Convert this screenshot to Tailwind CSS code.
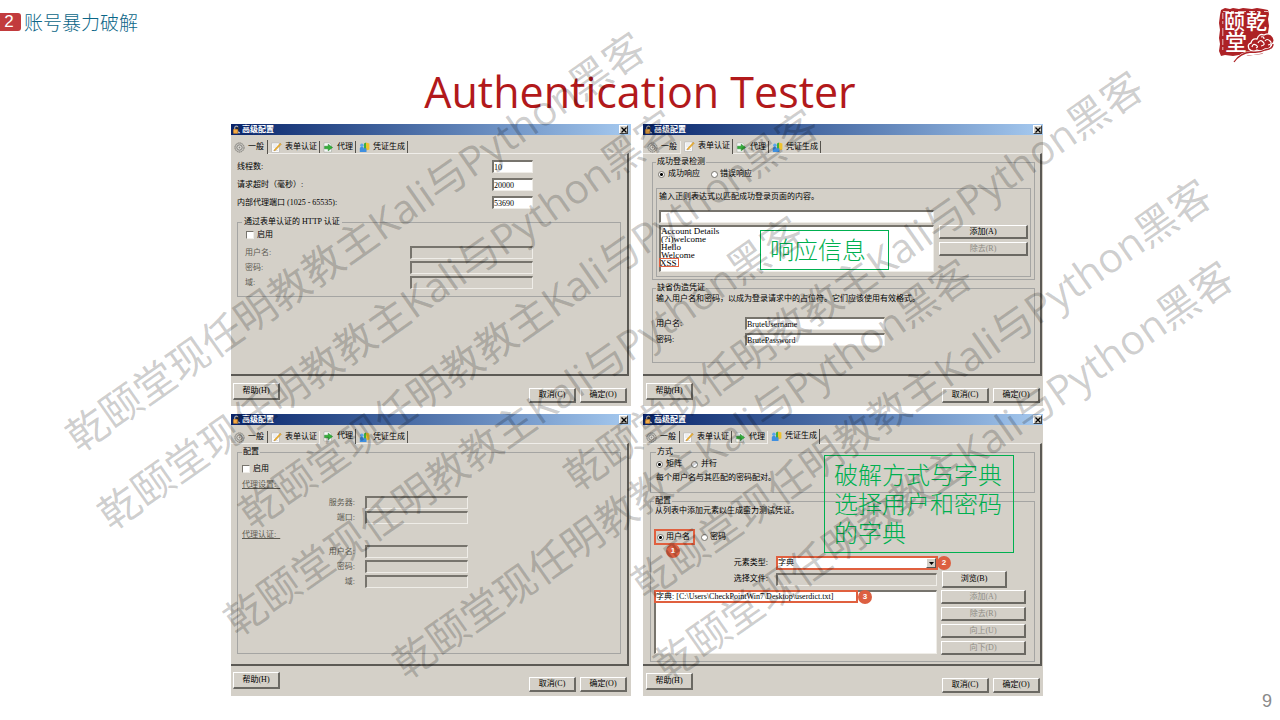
<!DOCTYPE html>
<html lang="zh-CN">
<head>
<meta charset="utf-8">
<meta name="viewport" content="width=device-width, initial-scale=1">
<title>Authentication Tester</title>
<script src="https://cdn.jsdelivr.net/npm/@tailwindcss/browser@4"></script>
</head>
<body class="relative min-h-screen overflow-x-hidden bg-white font-['Open_Sans','Noto_Sans_CJK_SC',sans-serif]">

<svg class="hidden" aria-hidden="true">
  <symbol id="lock" viewBox="0 0 10 10">
    <path d="M3 5.500V3a1.800 1.800 0 0 1 3.600 0v2" fill="none" stroke="#a9a9a9" stroke-width="1.300"/>
    <path d="M5 2.500h2.500v3H5z" fill="#222"/>
    <rect x="1.500" y="4.800" width="5" height="4.600" rx=".6" fill="#f5ac45" stroke="#c9781c" stroke-width=".5"/>
    <path d="M6.800 9.300V7L9 8.300v1z" fill="#ccc"/>
  </symbol>
  <symbol id="gear" viewBox="0 0 11 11">
    <circle cx="5.5" cy="5.5" r="4.6" fill="#c4c2bd" stroke="#77756f" stroke-width=".9" stroke-dasharray="1.6 .5"/>
    <circle cx="5.5" cy="5.5" r="2.6" fill="#dddbd6" stroke="#75736e" stroke-width=".8"/>
    <circle cx="5.5" cy="5.5" r=".9" fill="#8d8b86"/>
  </symbol>
  <symbol id="form" viewBox="0 0 11 11">
    <rect x=".8" y="1" width="7.4" height="9.4" fill="#fdfdfd" stroke="#aaa" stroke-width=".5"/>
    <path d="M2 3h4M2 5h3M2 8.500h5" stroke="#c9ccd2" stroke-width=".6"/>
    <path d="M3.400 7.600 9.200 1.200l1.100 1L4.600 8.300l-1.600.5z" fill="#f2b632" stroke="#b3791c" stroke-width=".4"/>
  </symbol>
  <symbol id="proxy" viewBox="0 0 11 11">
    <path d="M1 .8h5.500L8.500 3v7H1z" fill="#f7f9f7" stroke="#9aa09a" stroke-width=".5"/>
    <path d="M1.600 4.200h3.600V2.200L9.600 5.500 5.200 8.800V6.800H1.600z" fill="#35b13a" stroke="#1b7d24" stroke-width=".5"/>
  </symbol>
  <symbol id="creds" viewBox="0 0 11 11">
    <path d="M.8 10V6.500Q.8 4.800 2.800 4.800T5 6.500V10z" fill="#3f8fe0"/>
    <circle cx="2.900" cy="3.200" r="1.700" fill="#5aa6ec"/>
    <path d="M5 1.500 7 .5v8L5 9.600z" fill="#3fae3d"/>
    <path d="M7 .5 10.400 1.600v6L7 8.500z" fill="#f0c22c"/>
    <path d="M5 6.300h2.500V10H5z" fill="#3f8fe0"/>
  </symbol>
</svg>

<header class="flex h-[62px] items-start justify-between pr-1">
  <div class="flex items-center gap-[3px] pt-3">
    <span class="flex h-[18px] w-[21px] items-center justify-center rounded-r-[3px] bg-[#c23b3d] pr-[3px] font-['Liberation_Sans',sans-serif] text-[17px] leading-[18px] text-white">2</span>
    <span class="font-['Noto_Sans_CJK_SC',sans-serif] text-[19px] font-light leading-[20px] text-[#0b6687]">账号暴力破解</span>
  </div>
  <svg class="mt-[6px] h-[58px] w-[58px]" viewBox="0 0 58 58" role="img" aria-label="颐乾堂">
    <path d="M3 4 7 2l5 1 3-1 6 1 4-1 9 1 5-1 6 1 5 1 1 4-1 5 1 7-1 7 1 4-3 8 1 4-5 5-9 1-6 1-8-1-6 1-8-1-4 1-2-5 1-7-1-6 1-8-1-7 1-8z" fill="#ad2226"/>
    <path d="M5 5.500h45M4.800 7v38" fill="none" stroke="#fff" stroke-width=".7" stroke-dasharray="6 2 3 4 8 3"/>
    <g fill="#fff" font-family="Noto Sans CJK SC, sans-serif" font-weight="500">
      <text x="6" y="23" font-size="21">颐</text>
      <text x="28" y="23" font-size="21">乾</text>
      <text x="7" y="44" font-size="22">堂</text>
    </g>
    <path d="M17 56q6-9 18-9 9-1 15-4 7-4 6-9" fill="none" stroke="#fff" stroke-width="4"/>
    <path d="M31 43q-2-5 2-6 1-5 6-4 2-6 7-4 6-3 9 2 3 5-2 8 0 4-6 4-4 3-8 1-4 3-8-1z" fill="#ad2226" stroke="#fff" stroke-width="1.300"/>
    <path d="M34 41q1-4 4-2t0 3M40 37q2-4 5-1t-2 4M47 35q2-3 5 0t-2 4M43 31q3-1 3 2" fill="none" stroke="#fff" stroke-width="1.200"/>
    <path d="M16 56q6-9 17-10 9 1 14-2 8-1 8-6" fill="none" stroke="#ad2226" stroke-width="1.300"/>
  </svg>
</header>

<h1 class="h-[62px] text-center text-[43px] leading-[60px] text-[#b2191b]">Authentication Tester</h1>

<main class="grid grid-cols-2 gap-x-3 gap-y-2 pl-[231px] pr-[237px] font-['Liberation_Serif','Noto_Sans_CJK_SC',serif] text-[8px] leading-[10px] text-black">

  <!-- General tab -->
  <section class="flex min-h-[282px] flex-col bg-[#d4d0c8]">
    <div class="flex h-[11px] items-center justify-between bg-linear-to-r from-[#0a246a] to-[#a6caf0] pl-px pr-[3px] text-white">
      <h2 class="flex items-center gap-px font-bold"><svg class="size-[9px]"><use href="#lock"/></svg>高级配置</h2>
      <button aria-label="关闭" class="flex size-[9px] items-center justify-center border border-t-white border-l-white border-r-[#404040] border-b-[#404040] bg-[#d4d0c8]"><svg class="size-[6px]" viewBox="0 0 6 6"><path d="M.5.5l5 5M5.500.5l-5 5" stroke="#000" stroke-width="1.300"/></svg></button>
    </div>
    <div role="tablist" class="flex h-[18px] items-end">
      <button role="tab" aria-selected="true" class="relative -mb-px flex h-[14px] items-center gap-[3px] border-r border-[#55524c] bg-[#d4d0c8] pl-[3px] pr-[3px]"><svg class="size-[11px]"><use href="#gear"/></svg>一般</button>
      <button role="tab" class="flex h-[12px] items-center gap-[3px] border-r border-[#55524c] pl-[3px] pr-[2px]"><svg class="size-[11px]"><use href="#form"/></svg>表单认证</button>
      <button role="tab" class="flex h-[12px] items-center gap-[3px] border-r border-[#55524c] pl-[3px] pr-[2px]"><svg class="size-[11px]"><use href="#proxy"/></svg>代理</button>
      <button role="tab" class="flex h-[12px] items-center gap-[3px] border-r border-[#55524c] pl-[3px] pr-[2px]"><svg class="size-[11px]"><use href="#creds"/></svg>凭证生成</button>
    </div>
    <div class="mr-[2px] flex-1 border-t border-r-2 border-b-2 border-t-[#f0eeea] border-r-[#5c5a55] border-b-[#5c5a55] pl-[6px] pr-[6px] pt-[6px]">
      <div class="grid grid-cols-[255px_41px] items-center gap-y-[5px]">
        <label for="threads">线程数:</label>
        <input id="threads" value="10" class="h-[13px] w-full border-t-2 border-l-2 border-r border-b border-t-[#77746d] border-l-[#77746d] border-r-[#efede8] border-b-[#efede8] bg-white">
        <label for="timeout">请求超时（毫秒）:</label>
        <input id="timeout" value="20000" class="h-[13px] w-full border-t-2 border-l-2 border-r border-b border-t-[#77746d] border-l-[#77746d] border-r-[#efede8] border-b-[#efede8] bg-white">
        <label for="port">内部代理端口 (1025 - 65535):</label>
        <input id="port" value="53690" class="h-[13px] w-full border-t-2 border-l-2 border-r border-b border-t-[#77746d] border-l-[#77746d] border-r-[#efede8] border-b-[#efede8] bg-white">
      </div>
      <fieldset class="mt-2 border border-[#a5a5a3] pb-[7px] pl-[7px]">
        <legend class="-ml-[3px] px-[2px]">通过表单认证的 HTTP 认证</legend>
        <label class="mt-[3px] flex h-[10px] items-center gap-[3px] pl-px"><input type="checkbox" class="size-[8px] appearance-none border border-t-[#77746d] border-l-[#77746d] border-r-[#efede8] border-b-[#efede8] bg-white">启用</label>
        <div class="mt-[6px] grid grid-cols-[165px_123px] items-center gap-y-[2px] text-[#5d5b52]">
          <label for="u1">用户名:</label>
          <input id="u1" disabled class="h-[13px] w-full border-t-2 border-l-2 border-r border-b border-t-[#77746d] border-l-[#77746d] border-r-[#efede8] border-b-[#efede8]">
          <label for="p1">密码:</label>
          <input id="p1" disabled class="h-[13px] w-full border-t-2 border-l-2 border-r border-b border-t-[#77746d] border-l-[#77746d] border-r-[#efede8] border-b-[#efede8]">
          <label for="d1">域:</label>
          <input id="d1" disabled class="h-[13px] w-full border-t-2 border-l-2 border-r border-b border-t-[#77746d] border-l-[#77746d] border-r-[#efede8] border-b-[#efede8]">
        </div>
      </fieldset>
    </div>
    <div class="flex h-[30px] items-start justify-between pl-[2px] pr-[4px] pt-[7px]">
      <button class="h-[17px] w-[47px] border border-t-white border-l-white border-r-2 border-b-2 border-r-[#6b6963] border-b-[#6b6963]">帮助(H)</button>
      <div class="mt-[5px] flex gap-1">
        <button class="h-[15px] w-[47px] border border-t-white border-l-white border-r-2 border-b-2 border-r-[#6b6963] border-b-[#6b6963]">取消(C)</button>
        <button class="h-[15px] w-[47px] border border-t-white border-l-white border-r-2 border-b-2 border-r-[#6b6963] border-b-[#6b6963]">确定(O)</button>
      </div>
    </div>
  </section>

  <!-- Form authentication tab -->
  <section class="relative flex min-h-[282px] flex-col bg-[#d4d0c8]">
    <div class="flex h-[11px] items-center justify-between bg-linear-to-r from-[#0a246a] to-[#a6caf0] pl-px pr-px text-white">
      <h2 class="flex items-center gap-px font-bold"><svg class="size-[9px]"><use href="#lock"/></svg>高级配置</h2>
      <button aria-label="关闭" class="flex size-[9px] items-center justify-center border border-t-white border-l-white border-r-[#404040] border-b-[#404040] bg-[#d4d0c8]"><svg class="size-[6px]" viewBox="0 0 6 6"><path d="M.5.5l5 5M5.500.5l-5 5" stroke="#000" stroke-width="1.300"/></svg></button>
    </div>
    <div role="tablist" class="flex h-[18px] items-end pl-px">
      <button role="tab" class="flex h-[12px] items-center gap-[3px] border-r border-[#f0eeea] pl-[3px] pr-[3px]"><svg class="size-[11px]"><use href="#gear"/></svg>一般</button>
      <button role="tab" aria-selected="true" class="relative -mb-px flex h-[15px] items-center gap-[3px] border-r border-[#55524c] bg-[#d4d0c8] pb-px pl-[3px] pr-[2px]"><svg class="size-[11px]"><use href="#form"/></svg>表单认证</button>
      <button role="tab" class="flex h-[12px] items-center gap-[3px] border-r border-[#55524c] pl-[3px] pr-[2px]"><svg class="size-[11px]"><use href="#proxy"/></svg>代理</button>
      <button role="tab" class="flex h-[12px] items-center gap-[3px] border-r border-[#55524c] pl-[3px] pr-[2px]"><svg class="size-[11px]"><use href="#creds"/></svg>凭证生成</button>
    </div>
    <div class="mr-px flex-1 border-t border-r-2 border-b-2 border-t-[#f0eeea] border-r-[#5c5a55] border-b-[#5c5a55] pl-[9px] pr-[5px] pt-[3px]">
      <fieldset class="border border-[#a5a5a3] px-[3px] pb-[2px]">
        <legend class="px-px">成功登录检测</legend>
        <div class="flex h-[14px] items-center gap-[11px] pl-[2px]">
          <label class="flex items-center gap-[3px]"><input type="radio" name="resp" checked class="size-[7px] appearance-none rounded-full border border-[#77746d] bg-white checked:bg-[radial-gradient(#000_0_1px,#fff_2px)]">成功响应</label>
          <label class="flex items-center gap-[2px]"><input type="radio" name="resp" class="size-[7px] appearance-none rounded-full border border-[#77746d] bg-white">错误响应</label>
        </div>
        <div class="mt-[7px] border border-[#a5a5a3] pb-1 pl-[2px] pr-[2px] pt-[3px]">
          <label for="regex" class="block">输入正则表达式以匹配成功登录页面的内容。</label>
          <input id="regex" class="mt-[8px] block h-[13px] w-[275px] border-t-2 border-l-2 border-r border-b border-t-[#77746d] border-l-[#77746d] border-r-[#efede8] border-b-[#efede8] bg-white">
          <div class="mt-[2px] flex gap-[5px]">
            <ul class="h-[47px] w-[275px] border-t-2 border-l-2 border-r border-b border-t-[#77746d] border-l-[#77746d] border-r-[#efede8] border-b-[#efede8] bg-white text-[9px] leading-[8px]">
              <li>Account Details</li>
              <li>(?i)welcome</li>
              <li>Hello</li>
              <li>Welcome</li>
              <li class="-ml-[2px] -mt-px flex h-[9px] w-[20px] items-center border border-[#e0603f]">XSS</li>
            </ul>
            <div class="flex flex-1 flex-col gap-[3px]">
              <button class="h-[14px] border border-t-white border-l-white border-r-2 border-b-2 border-r-[#6b6963] border-b-[#6b6963] leading-[10px]">添加(A)</button>
              <button disabled class="h-[14px] border border-t-white border-l-white border-r-2 border-b-2 border-r-[#6b6963] border-b-[#6b6963] leading-[10px] text-[#8f8d86]">除去(R)</button>
            </div>
          </div>
        </div>
      </fieldset>
      <fieldset class="mt-[3px] border border-[#a5a5a3] pb-4 pl-[3px]">
        <legend class="px-px">缺省伪造凭证</legend>
        <p class="pt-px">输入用户名和密码，以成为登录请求中的占位符。它们应该使用有效格式。</p>
        <div class="mt-[13px] grid grid-cols-[89px_140px] items-center gap-y-[3px]">
          <label for="u2">用户名:</label>
          <input id="u2" value="BruteUsername" class="h-[13px] w-full border-t-2 border-l-2 border-r border-b border-t-[#77746d] border-l-[#77746d] border-r-[#efede8] border-b-[#efede8] bg-white">
          <label for="p2">密码:</label>
          <input id="p2" value="BrutePassword" class="h-[13px] w-full border-t-2 border-l-2 border-r border-b border-t-[#77746d] border-l-[#77746d] border-r-[#efede8] border-b-[#efede8] bg-white">
        </div>
      </fieldset>
    </div>
    <div class="flex h-[30px] items-start justify-between pl-[3px] pr-[3px] pt-[7px]">
      <button class="h-[17px] w-[47px] border border-t-white border-l-white border-r-2 border-b-2 border-r-[#6b6963] border-b-[#6b6963]">帮助(H)</button>
      <div class="mt-[5px] flex gap-1">
        <button class="h-[15px] w-[47px] border border-t-white border-l-white border-r-2 border-b-2 border-r-[#6b6963] border-b-[#6b6963]">取消(C)</button>
        <button class="h-[15px] w-[47px] border border-t-white border-l-white border-r-2 border-b-2 border-r-[#6b6963] border-b-[#6b6963]">确定(O)</button>
      </div>
    </div>
    <p class="absolute left-[117px] top-[106px] h-[40px] w-[129px] border border-[#00b050] pl-[9px] font-['Noto_Sans_CJK_SC',sans-serif] text-[24px] font-light leading-[36px] text-[#00b050]">响应信息</p>
  </section>

  <!-- Proxy tab -->
  <section class="flex min-h-[282px] flex-col bg-[#d4d0c8]">
    <div class="flex h-[11px] items-center justify-between bg-linear-to-r from-[#0a246a] to-[#a6caf0] pl-px pr-[3px] text-white">
      <h2 class="flex items-center gap-px font-bold"><svg class="size-[9px]"><use href="#lock"/></svg>高级配置</h2>
      <button aria-label="关闭" class="flex size-[9px] items-center justify-center border border-t-white border-l-white border-r-[#404040] border-b-[#404040] bg-[#d4d0c8]"><svg class="size-[6px]" viewBox="0 0 6 6"><path d="M.5.5l5 5M5.500.5l-5 5" stroke="#000" stroke-width="1.300"/></svg></button>
    </div>
    <div role="tablist" class="flex h-[18px] items-end">
      <button role="tab" class="flex h-[12px] items-center gap-[3px] border-r border-[#55524c] pl-[3px] pr-[3px]"><svg class="size-[11px]"><use href="#gear"/></svg>一般</button>
      <button role="tab" class="flex h-[12px] items-center gap-[3px] border-r border-[#f0eeea] pl-[3px] pr-[2px]"><svg class="size-[11px]"><use href="#form"/></svg>表单认证</button>
      <button role="tab" aria-selected="true" class="relative -mb-px flex h-[15px] items-center gap-[3px] border-r border-[#55524c] bg-[#d4d0c8] pb-px pl-[3px] pr-[2px]"><svg class="size-[11px]"><use href="#proxy"/></svg>代理</button>
      <button role="tab" class="flex h-[12px] items-center gap-[3px] border-r border-[#55524c] pl-[3px] pr-[2px]"><svg class="size-[11px]"><use href="#creds"/></svg>凭证生成</button>
    </div>
    <div class="mr-[2px] flex flex-1 flex-col border-t border-r-2 border-b-2 border-t-[#f0eeea] border-r-[#5c5a55] border-b-[#5c5a55] pb-[10px] pl-[6px] pr-[6px] pt-[3px]">
      <fieldset class="flex-1 border border-[#a5a5a3] pl-1">
        <legend class="px-px">配置</legend>
        <label class="flex h-[23px] items-center gap-[3px]"><input type="checkbox" class="size-[8px] appearance-none border border-t-[#77746d] border-l-[#77746d] border-r-[#efede8] border-b-[#efede8] bg-white">启用</label>
        <div class="grid grid-cols-[113px_103px] items-center gap-x-[10px] gap-y-[2px] text-[#5d5b52]">
          <h3 class="col-span-2 mb-[4px] underline">代理设置:&nbsp;&nbsp;</h3>
          <label for="srv" class="text-right">服务器:</label>
          <input id="srv" disabled class="h-[13px] w-full border-t-2 border-l-2 border-r border-b border-t-[#77746d] border-l-[#77746d] border-r-[#efede8] border-b-[#efede8]">
          <label for="pp" class="text-right">端口:</label>
          <input id="pp" disabled class="h-[13px] w-full border-t-2 border-l-2 border-r border-b border-t-[#77746d] border-l-[#77746d] border-r-[#efede8] border-b-[#efede8]">
          <h3 class="col-span-2 mb-[3px] mt-[4px] underline">代理认证:&nbsp;&nbsp;</h3>
          <label for="u3" class="text-right">用户名:</label>
          <input id="u3" disabled class="h-[13px] w-full border-t-2 border-l-2 border-r border-b border-t-[#77746d] border-l-[#77746d] border-r-[#efede8] border-b-[#efede8]">
          <label for="p3" class="text-right">密码:</label>
          <input id="p3" disabled class="h-[13px] w-full border-t-2 border-l-2 border-r border-b border-t-[#77746d] border-l-[#77746d] border-r-[#efede8] border-b-[#efede8]">
          <label for="d3" class="text-right">域:</label>
          <input id="d3" disabled class="h-[13px] w-full border-t-2 border-l-2 border-r border-b border-t-[#77746d] border-l-[#77746d] border-r-[#efede8] border-b-[#efede8]">
        </div>
      </fieldset>
    </div>
    <div class="flex h-[30px] items-start justify-between pl-[2px] pr-[4px] pt-[6px]">
      <button class="h-[17px] w-[47px] border border-t-white border-l-white border-r-2 border-b-2 border-r-[#6b6963] border-b-[#6b6963]">帮助(H)</button>
      <div class="mt-[5px] flex gap-1">
        <button class="h-[15px] w-[47px] border border-t-white border-l-white border-r-2 border-b-2 border-r-[#6b6963] border-b-[#6b6963]">取消(C)</button>
        <button class="h-[15px] w-[47px] border border-t-white border-l-white border-r-2 border-b-2 border-r-[#6b6963] border-b-[#6b6963]">确定(O)</button>
      </div>
    </div>
  </section>

  <!-- Credential generation tab -->
  <section class="relative flex min-h-[282px] flex-col bg-[#d4d0c8]">
    <div class="flex h-[11px] items-center justify-between bg-linear-to-r from-[#0a246a] to-[#a6caf0] pl-px pr-px text-white">
      <h2 class="flex items-center gap-px font-bold"><svg class="size-[9px]"><use href="#lock"/></svg>高级配置</h2>
      <button aria-label="关闭" class="flex size-[9px] items-center justify-center border border-t-white border-l-white border-r-[#404040] border-b-[#404040] bg-[#d4d0c8]"><svg class="size-[6px]" viewBox="0 0 6 6"><path d="M.5.5l5 5M5.500.5l-5 5" stroke="#000" stroke-width="1.300"/></svg></button>
    </div>
    <div role="tablist" class="flex h-[18px] items-end">
      <button role="tab" class="flex h-[12px] items-center gap-[3px] border-r border-[#55524c] pl-[3px] pr-[3px]"><svg class="size-[11px]"><use href="#gear"/></svg>一般</button>
      <button role="tab" class="flex h-[12px] items-center gap-[3px] border-r border-[#55524c] pl-[3px] pr-[2px]"><svg class="size-[11px]"><use href="#form"/></svg>表单认证</button>
      <button role="tab" class="flex h-[12px] items-center gap-[3px] border-r border-[#f0eeea] pl-[3px] pr-[2px]"><svg class="size-[11px]"><use href="#proxy"/></svg>代理</button>
      <button role="tab" aria-selected="true" class="relative -mb-px flex h-[15px] items-center gap-[3px] border-r border-[#55524c] bg-[#d4d0c8] pb-px pl-[3px] pr-[2px]"><svg class="size-[11px]"><use href="#creds"/></svg>凭证生成</button>
    </div>
    <div class="mr-px flex-1 border-t border-r-2 border-b-2 border-t-[#f0eeea] border-r-[#5c5a55] border-b-[#5c5a55] pl-[7px] pr-[5px] pt-[3px]">
      <fieldset class="border border-[#a5a5a3] pb-[9px] pl-[5px]">
        <legend class="px-px">方式</legend>
        <div class="flex h-[14px] items-center gap-[9px]">
          <label class="flex items-center gap-[3px]"><input type="radio" name="mode" checked class="size-[7px] appearance-none rounded-full border border-[#77746d] bg-white checked:bg-[radial-gradient(#000_0_1px,#fff_2px)]">矩阵</label>
          <label class="flex items-center gap-[3px]"><input type="radio" name="mode" class="size-[7px] appearance-none rounded-full border border-[#77746d] bg-white">并行</label>
        </div>
        <p class="mt-[2px]">每个用户名与其匹配的密码配对。</p>
      </fieldset>
      <fieldset class="mt-[3px] border border-[#a5a5a3] pb-[6px] pl-[3px]">
        <legend class="px-px">配置</legend>
        <p class="pl-px">从列表中添加元素以生成蛮力测试凭证。</p>
        <div class="mt-[13px] flex h-[16px] items-center gap-[6px]">
          <label class="flex h-[16px] w-[41px] items-center gap-[2px] border-2 border-[#e0603f] pl-px"><input type="radio" name="kind" checked class="size-[7px] appearance-none rounded-full border border-[#77746d] bg-white checked:bg-[radial-gradient(#000_0_1px,#fff_2px)]">用户名</label>
          <label class="flex items-center gap-[2px]"><input type="radio" name="kind" class="size-[7px] appearance-none rounded-full border border-[#77746d] bg-white">密码</label>
        </div>
        <div class="mt-[11px] grid grid-cols-[114px_162px] items-center gap-x-[8px]">
          <label for="etype" class="text-right">元素类型:</label>
          <div class="relative">
            <select id="etype" class="block h-[14px] w-full appearance-none border-2 border-[#e0603f] bg-white leading-[10px]"><option>字典</option></select>
            <span class="pointer-events-none absolute right-[2px] top-[2px] flex h-[10px] w-[10px] items-center justify-center border border-t-white border-l-white border-r-[#555] border-b-[#555] bg-[#d4d0c8]"><svg class="h-[3px] w-[5px]" viewBox="0 0 5 3"><path d="M0 0h5L2.500 3z"/></svg></span>
          </div>
        </div>
        <div class="grid grid-cols-[114px_161px_64px] items-center gap-x-[8px]">
          <label for="file" class="text-right">选择文件:</label>
          <input id="file" disabled class="h-[13px] w-full border-t-2 border-l-2 border-r border-b border-t-[#77746d] border-l-[#77746d] border-r-[#efede8] border-b-[#efede8]">
          <button class="-ml-[3px] mt-px h-[17px] w-[65px] border border-t-white border-l-white border-r-2 border-b-2 border-r-[#6b6963] border-b-[#6b6963]">浏览(B)</button>
        </div>
        <div class="mt-[2px] flex gap-1">
          <ul class="h-[64px] w-[283px] border-t-2 border-l-2 border-r border-b border-t-[#77746d] border-l-[#77746d] border-r-[#efede8] border-b-[#efede8] bg-white">
            <li class="-ml-[2px] -mt-[2px] w-[204px] border-2 border-[#e0603f] leading-[9px]">字典: [C:\Users\CheckPointWin7\Desktop\userdict.txt]</li>
          </ul>
          <div class="flex w-[85px] flex-col gap-[3px]">
            <button disabled class="h-[14px] border border-t-white border-l-white border-r-2 border-b-2 border-r-[#6b6963] border-b-[#6b6963] leading-[10px] text-[#8f8d86]">添加(A)</button>
            <button disabled class="h-[14px] border border-t-white border-l-white border-r-2 border-b-2 border-r-[#6b6963] border-b-[#6b6963] leading-[10px] text-[#8f8d86]">除去(R)</button>
            <button disabled class="h-[14px] border border-t-white border-l-white border-r-2 border-b-2 border-r-[#6b6963] border-b-[#6b6963] leading-[10px] text-[#8f8d86]">向上(U)</button>
            <button disabled class="h-[14px] border border-t-white border-l-white border-r-2 border-b-2 border-r-[#6b6963] border-b-[#6b6963] leading-[10px] text-[#8f8d86]">向下(D)</button>
          </div>
        </div>
      </fieldset>
    </div>
    <div class="flex h-[30px] items-start justify-between pl-[3px] pr-[3px] pt-[7px]">
      <button class="h-[17px] w-[47px] border border-t-white border-l-white border-r-2 border-b-2 border-r-[#6b6963] border-b-[#6b6963]">帮助(H)</button>
      <div class="mt-[5px] flex gap-1">
        <button class="h-[15px] w-[47px] border border-t-white border-l-white border-r-2 border-b-2 border-r-[#6b6963] border-b-[#6b6963]">取消(C)</button>
        <button class="h-[15px] w-[47px] border border-t-white border-l-white border-r-2 border-b-2 border-r-[#6b6963] border-b-[#6b6963]">确定(O)</button>
      </div>
    </div>
    <span class="absolute left-[23px] top-[130px] size-[14px] rounded-full bg-[#dc5f41] text-center font-['Liberation_Sans',sans-serif] font-bold leading-[14px] text-white">1</span>
    <span class="absolute left-[294px] top-[142px] size-[14px] rounded-full bg-[#dc5f41] text-center font-['Liberation_Sans',sans-serif] font-bold leading-[14px] text-white">2</span>
    <span class="absolute left-[215px] top-[176px] size-[14px] rounded-full bg-[#dc5f41] text-center font-['Liberation_Sans',sans-serif] font-bold leading-[14px] text-white">3</span>
    <p class="absolute left-[181px] top-[41px] h-[98px] w-[190px] border border-[#00b050] pl-[9px] pr-[8px] pt-[3px] font-['Noto_Sans_CJK_SC',sans-serif] text-[24px] font-light leading-[29px] text-[#00b050]">破解方式与字典选择用户和密码的字典</p>
  </section>
</main>

<footer class="flex justify-end pr-[8px] font-['Liberation_Sans',sans-serif] text-[18px] leading-[10px] text-[#8a8a8a]">9</footer>

<!-- Diagonal watermarks, each centred on its own point of the slide -->
<div class="pointer-events-none absolute inset-0 overflow-hidden whitespace-nowrap font-['Open_Sans','Noto_Sans_CJK_SC',sans-serif] text-[41px] leading-[48px] text-black/20">
  <span class="absolute left-[355px] top-[241px] -translate-1/2 -rotate-35">乾颐堂现任明教教主Kali与Python黑客</span>
  <span class="absolute left-[387px] top-[319px] -translate-1/2 -rotate-35">乾颐堂现任明教教主Kali与Python黑客</span>
  <span class="absolute left-[528px] top-[318px] -translate-1/2 -rotate-35">乾颐堂现任明教教主Kali与Python黑客</span>
  <span class="absolute left-[513px] top-[425px] -translate-1/2 -rotate-35">乾颐堂现任明教教主Kali与Python黑客</span>
  <span class="absolute left-[682px] top-[468px] -translate-1/2 -rotate-35">乾颐堂现任明教教主Kali与Python黑客</span>
  <span class="absolute left-[853px] top-[280px] -translate-1/2 -rotate-35">乾颐堂现任明教教主Kali与Python黑客</span>
  <span class="absolute left-[921px] top-[388px] -translate-1/2 -rotate-35">乾颐堂现任明教教主Kali与Python黑客</span>
  <span class="absolute left-[943px] top-[470px] -translate-1/2 -rotate-35">乾颐堂现任明教教主Kali与Python黑客</span>
</div>
</body>
</html>
